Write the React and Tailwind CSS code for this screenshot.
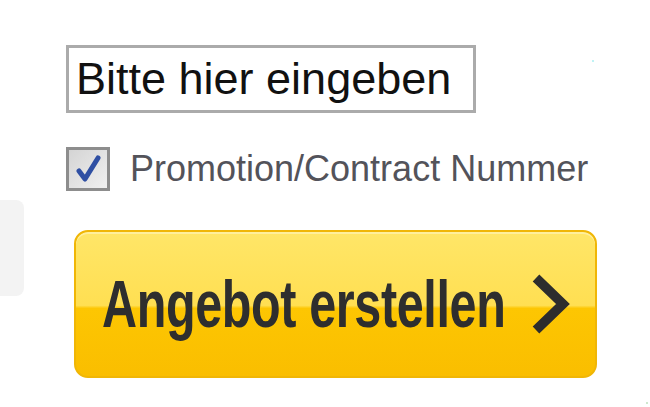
export default function App() {
  return (
    <div className="relative w-[650px] h-[407px] bg-white overflow-hidden flex font-['Liberation_Sans',Arial,sans-serif]">
      {/* cut-off panel on the left edge */}
      <div className="w-[24px] h-[96px] mt-[200px] bg-[#f3f3f3] rounded-r-lg shrink-0" />

      <div className="ml-[42px] pt-[45px] flex flex-col">
        <input
          type="text"
          defaultValue="Bitte hier eingeben"
          className="w-[410px] h-[68px] border-[3px] border-[#ababab] bg-white px-[7px] text-[45px] text-[#111] leading-none outline-none font-['Liberation_Sans',Arial,sans-serif]"
        />

        <label className="mt-[34px] flex items-center gap-[20px] h-[44px]">
          <span className="w-[44px] h-[44px] border-[3px] border-[#8d8d8d] bg-[linear-gradient(135deg,#d4d4d4,#f0f0f0)] flex items-center justify-center shrink-0">
            <svg width="30" height="30" viewBox="0 0 30 30">
              <path d="M6 17 L12 25 L25 4" fill="none" stroke="#2f4fa3" strokeWidth="5" strokeLinejoin="round" strokeLinecap="round" />
            </svg>
          </span>
          <span className="text-[36px] text-[#53535a] leading-none whitespace-nowrap">Promotion/Contract Nummer</span>
        </label>

        <button className="mt-[39px] ml-[8px] w-[523px] h-[148px] rounded-[14px] border-2 border-[#f0b606] bg-[linear-gradient(to_bottom,#ffe668_0%,#ffdf52_51%,#fdc602_53%,#fabe00_100%)] shadow-[inset_0_2px_0_rgba(255,255,255,0.35)] flex items-center pl-[26px]">
          <div className="w-[406px] h-[80px] flex items-center">
            <span className="inline-block whitespace-nowrap origin-left scale-x-[0.735] text-[66px] font-bold text-[#2e2e2e] leading-none tracking-[-0.5px]">
              Angebot erstellen
            </span>
          </div>
          <svg className="ml-[22px]" width="40" height="62" viewBox="0 0 40 62">
            <path d="M6 5 L33 31 L6 57" fill="none" stroke="#2d2d2d" strokeWidth="9.5" strokeLinejoin="miter" />
          </svg>
        </button>
      </div>

      <span className="absolute left-[592px] top-[60px] w-[2px] h-[2px] bg-[#bff3f5]" />
      <span className="absolute left-[646px] top-[402px] w-[2px] h-[2px] bg-[#cfe8cf]" />
    </div>
  );
}
